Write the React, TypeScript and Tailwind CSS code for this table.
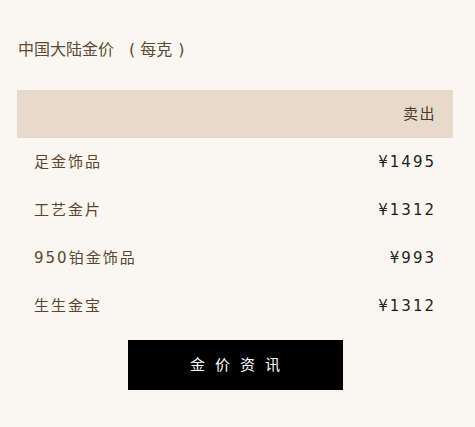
import React from "react";

const rows = [
  { name: "足金饰品", price: "¥1495" },
  { name: "工艺金片", price: "¥1312" },
  { name: "950铂金饰品", price: "¥993" },
  { name: "生生金宝", price: "¥1312" },
];

export default function App() {
  return (
    <div
      className="w-[475px] h-[427px] bg-[#faf7f2] px-[17px] pt-[38px]"
      style={{ fontFamily: '"DejaVu Sans", "Noto Sans CJK SC", sans-serif' }}
    >
      <div className="h-[24px] leading-[24px] text-[16px] text-[#5c4a34] pl-[1px]">
        <span>中国大陆金价</span>
        <span className="ml-[15px]">(</span>
        <span className="ml-[5px]">每克</span>
        <span className="ml-[6px]">)</span>
      </div>
      <div className="mt-[28px] w-[436px]">
        <div className="h-[48px] bg-[#e7dacb] flex items-center justify-end pr-[17px] text-[15px] text-[#4a3a28] tracking-[1.5px]">
          卖出
        </div>
        {rows.map((r) => (
          <div
            key={r.name}
            className="h-[48px] flex items-center justify-between pl-[17px] pr-[17px]"
          >
            <span className="text-[15px] text-[#5a4630] tracking-[2px]">{r.name}</span>
            <span className="text-[15px] text-[#1e1e1e] tracking-[2px]">{r.price}</span>
          </div>
        ))}
      </div>
      <div className="mt-[10px] w-[436px] flex justify-center">
        <div className="w-[215px] h-[50px] bg-black text-white flex items-center justify-center text-[15px] tracking-[10px] pl-[10px]">
          金价资讯
        </div>
      </div>
    </div>
  );
}
